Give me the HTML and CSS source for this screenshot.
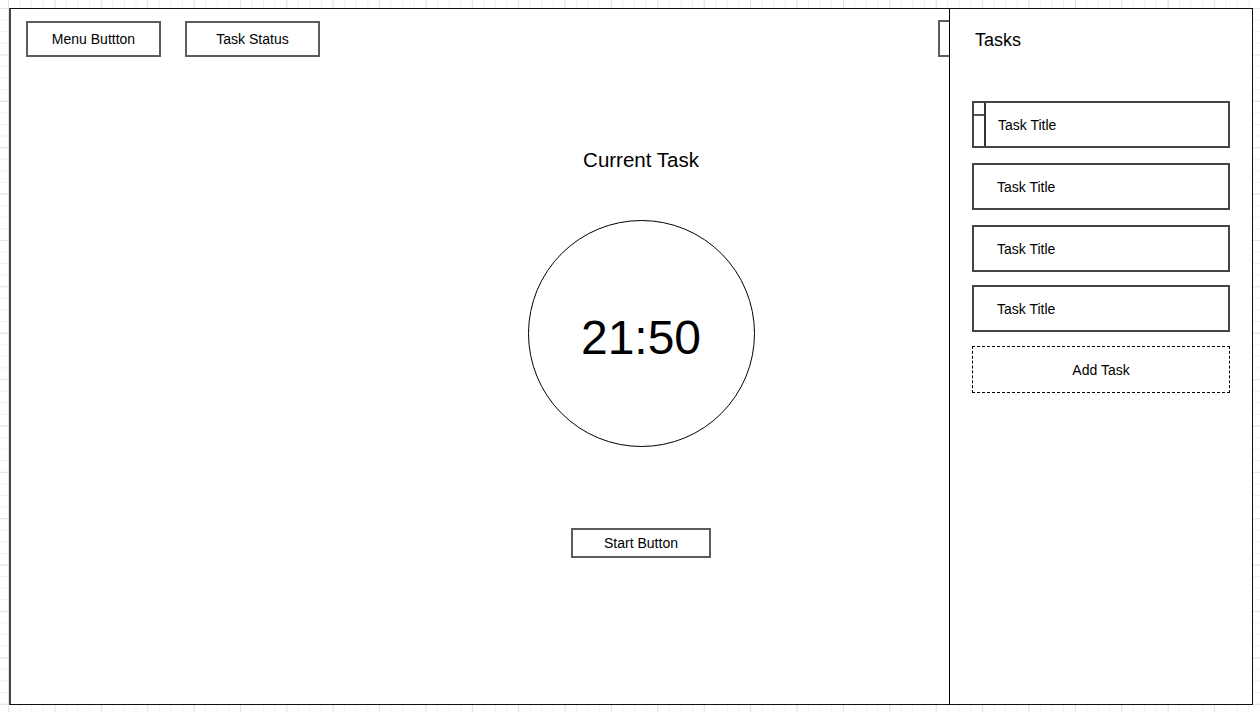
FILE: index.html
```html
<!DOCTYPE html>
<html>
<head>
<meta charset="utf-8">
<title>Task Timer Wireframe</title>
<link rel="stylesheet" href="styles.css">
</head>
<body>
<div class="frame">
  <div class="main">
    <div class="topbar">
      <div class="btn">Menu Buttton</div>
      <div class="btn">Task Status</div>
      <div class="btn btn-hidden"></div>
    </div>
    <div class="center">
      <div class="current">Current Task</div>
      <div class="timer"><span>21:50</span></div>
      <div class="start">Start Button</div>
    </div>
  </div>
  <div class="side">
    <div class="side-title">Tasks</div>
    <div class="task-list">
      <div class="task task-selected">
        <div class="handle"><div class="handle-top"></div></div>
        <div class="task-text">Task Title</div>
      </div>
      <div class="task"><div class="task-text">Task Title</div></div>
      <div class="task"><div class="task-text">Task Title</div></div>
      <div class="task task-tight"><div class="task-text">Task Title</div></div>
      <div class="add-task">Add Task</div>
    </div>
  </div>
</div>
</body>
</html>
```

FILE: styles.css
```css
html, body {
  margin: 0;
  padding: 0;
}
body {
  width: 1260px;
  height: 712px;
  overflow: hidden;
  font-family: "Liberation Sans", Arial, sans-serif;
  color: #000;
  background-color: #fff;
  background-image:
    linear-gradient(to right, #e4e4e4 1px, transparent 1px),
    linear-gradient(to bottom, #e4e4e4 1px, transparent 1px),
    linear-gradient(to right, #f1f1f1 1px, transparent 1px),
    linear-gradient(to bottom, #f1f1f1 1px, transparent 1px);
  background-size: 46.4px 46.4px, 46.4px 46.4px, 11.6px 11.6px, 11.6px 11.6px;
  background-position: 8px 8px, 8px 8px, 8px 8px, 8px 8px;
}
.frame {
  margin: 8px 0 0 9px;
  width: 1244px;
  height: 697px;
  box-sizing: border-box;
  border: 1px solid #111;
  border-left: 2px solid #444;
  background: #fff;
  display: flex;
}
.main {
  flex: 1;
  display: flex;
  flex-direction: column;
  overflow: hidden;
}
.topbar {
  display: flex;
  gap: 24px;
  padding: 12px 0 0 15px;
}
.btn {
  width: 135px;
  height: 36px;
  box-sizing: border-box;
  border: 2px solid #5c5c5c;
  display: flex;
  align-items: center;
  justify-content: center;
  font-size: 14px;
  flex-shrink: 0;
}
.btn-hidden {
  margin-left: auto;
  margin-right: -124px;
  margin-top: -1px;
  height: 37px;
}
.center {
  display: flex;
  flex-direction: column;
  align-items: center;
  padding-left: 322px;
}
.current {
  margin-top: 91px;
  font-size: 20.5px;
  line-height: 24px;
}
.timer {
  margin-top: 48px;
  width: 227px;
  height: 227px;
  box-sizing: border-box;
  border: 1px solid #000;
  border-radius: 50%;
  display: flex;
  align-items: center;
  justify-content: center;
  font-size: 48px;
}
.timer span {
  margin-top: 8px;
}
.start {
  margin-top: 81px;
  width: 140px;
  height: 30px;
  box-sizing: border-box;
  border: 2px solid #5c5c5c;
  display: flex;
  align-items: center;
  justify-content: center;
  font-size: 14px;
}
.side {
  width: 303px;
  flex-shrink: 0;
  border-left: 1px solid #000;
  padding: 20px 22px 0 22px;
  box-sizing: border-box;
}
.side-title {
  font-size: 18px;
  line-height: 22px;
  padding-left: 3px;
}
.task-list {
  margin-top: 50px;
  display: flex;
  flex-direction: column;
  gap: 15px;
}
.task {
  height: 47px;
  box-sizing: border-box;
  border: 2px solid #444;
  display: flex;
  align-items: center;
  font-size: 14px;
}
.task-tight {
  margin-top: -2px;
}
.task-text {
  padding-left: 23px;
}
.task-selected .task-text {
  padding-left: 12px;
}
.handle {
  width: 12px;
  height: 100%;
  box-sizing: border-box;
  border-right: 2px solid #333;
}
.handle-top {
  height: 11px;
  border-bottom: 2px solid #555;
}
.add-task {
  height: 47px;
  margin-top: -1px;
  box-sizing: border-box;
  border: 1px dashed #000;
  display: flex;
  align-items: center;
  justify-content: center;
  font-size: 14px;
}
```
